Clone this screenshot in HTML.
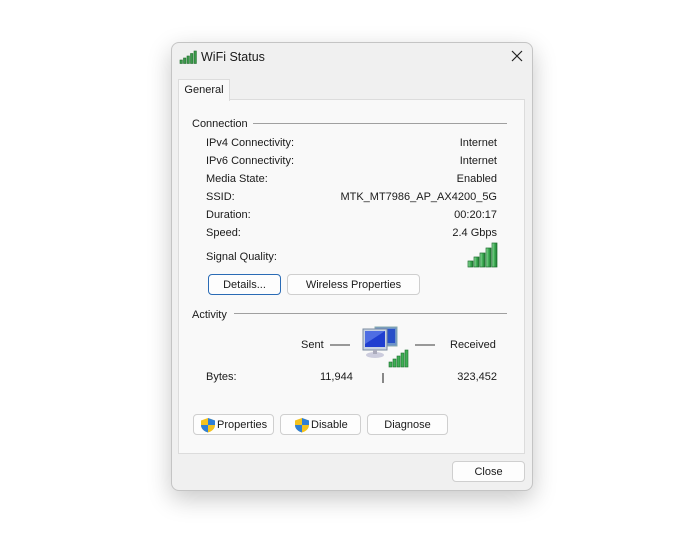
<!DOCTYPE html>
<html><head><meta charset="utf-8"><style>
body{margin:0;width:700px;height:536px;background:#fff;font-family:"Liberation Sans",sans-serif;font-size:11px;color:#1a1a1a;position:relative;overflow:hidden}
.a{position:absolute}
.win{left:171px;top:42px;width:360px;height:447px;background:#f0f0f0;border:1px solid #c4c4c4;border-radius:8px;box-shadow:0 8px 24px rgba(0,0,0,.22)}
.panel{left:178px;top:99px;width:345px;height:353px;background:#f9f9f9;border:1px solid #dcdcdc}
.tab{left:178px;top:79px;width:50px;height:21px;background:#f9f9f9;border:1px solid #dcdcdc;border-bottom:none;z-index:2;text-align:center;line-height:21px}
.btn{position:absolute;height:19px;background:#fdfdfd;border:1px solid #cfcfcf;border-radius:4px;text-align:center;line-height:21px;box-sizing:content-box}
.r{position:absolute;right:203px;text-align:right}
.l{position:absolute;left:206px}
.line{position:absolute;height:1px;background:#a0a0a0}
</style></head><body>
<div class="a win"></div>
<svg class="a" style="left:179px;top:50px" width="18" height="14"><g fill="#3a9a4a" stroke="#1f6b2c" stroke-width=".6"><rect x="1" y="10" width="2.4" height="3.5"/><rect x="4.5" y="8" width="2.4" height="5.5"/><rect x="8" y="6" width="2.4" height="7.5"/><rect x="11.5" y="3.5" width="2.4" height="10"/><rect x="15" y="1" width="2.4" height="12.5"/></g></svg>
<div class="a" style="left:201px;top:50px;font-size:12.5px">WiFi Status</div>
<svg class="a" style="left:511px;top:50px" width="12" height="12"><path d="M1 1L11 11M11 1L1 11" stroke="#222" stroke-width="1.2"/></svg>
<div class="a panel"></div>
<div class="a tab">General</div>
<div class="a" style="left:192px;top:118px">Connection</div>
<div class="line" style="left:253px;top:123px;width:254px"></div>
<div class="l" style="top:137px">IPv4 Connectivity:</div><div class="r" style="top:137px">Internet</div>
<div class="l" style="top:155px">IPv6 Connectivity:</div><div class="r" style="top:155px">Internet</div>
<div class="l" style="top:173px">Media State:</div><div class="r" style="top:173px">Enabled</div>
<div class="l" style="top:191px">SSID:</div><div class="r" style="top:191px">MTK_MT7986_AP_AX4200_5G</div>
<div class="l" style="top:209px">Duration:</div><div class="r" style="top:209px">00:20:17</div>
<div class="l" style="top:227px">Speed:</div><div class="r" style="top:227px">2.4 Gbps</div>
<div class="l" style="top:251px">Signal Quality:</div>
<svg class="a" style="left:467px;top:242px" width="32" height="26"><defs><linearGradient id="g" x1="0" x2="1"><stop offset="0" stop-color="#9be0a8"/><stop offset=".5" stop-color="#3fae55"/><stop offset="1" stop-color="#1d7a31"/></linearGradient></defs><g fill="url(#g)" stroke="#1d6e2e" stroke-width=".7"><rect x="1" y="19" width="5" height="6"/><rect x="7" y="15" width="5" height="10"/><rect x="13" y="11" width="5" height="14"/><rect x="19" y="6" width="5" height="19"/><rect x="25" y="1" width="5" height="24"/></g></svg>
<div class="btn" style="left:208px;top:274px;width:71px;border-color:#2a6bb5">Details...</div>
<div class="btn" style="left:287px;top:274px;width:131px">Wireless Properties</div>
<div class="a" style="left:192px;top:309px">Activity</div>
<div class="line" style="left:234px;top:313px;width:273px"></div>
<div class="a" style="left:301px;top:339px">Sent</div>
<div class="line" style="left:330px;top:344px;width:20px;height:2px;background:#999"></div>
<div class="line" style="left:415px;top:344px;width:20px;height:2px;background:#999"></div>
<div class="a" style="left:450px;top:339px">Received</div>
<svg class="a" style="left:362px;top:324px" width="50" height="46"><rect x="13" y="3" width="22" height="19" fill="#6d92c9" stroke="#8aa" stroke-width="1"/><rect x="15" y="5" width="18" height="14" fill="#2850c8"/><rect x="1" y="5" width="24" height="21" fill="#c8d4e4" stroke="#7b8ba0"/><rect x="3" y="7" width="20" height="16" fill="#1f3fd0"/><path d="M3 7L23 7L3 20Z" fill="#6f8ef0" opacity=".6"/><ellipse cx="13" cy="31" rx="9" ry="3" fill="#ccd"/><rect x="11" y="26" width="4" height="4" fill="#aab"/><g fill="#3fae55" stroke="#1d6e2e" stroke-width=".6"><rect x="27" y="38" width="3" height="5"/><rect x="31" y="35" width="3" height="8"/><rect x="35" y="32" width="3" height="11"/><rect x="39" y="29" width="3" height="14"/><rect x="43" y="26" width="3" height="17"/></g></svg>
<div class="l" style="top:371px;left:206px">Bytes:</div>
<div class="a" style="left:320px;top:371px">11,944</div>
<div class="line" style="left:382px;top:373px;width:2px;height:10px;background:#888"></div>
<div class="r" style="top:371px">323,452</div>
<div class="btn" style="left:193px;top:414px;width:79px;text-align:left;padding-left:0"><span style="position:absolute;left:23px">Properties</span></div>
<div class="btn" style="left:280px;top:414px;width:79px;text-align:left"><span style="position:absolute;left:30px">Disable</span></div>
<svg class="a" style="left:200px;top:417px;z-index:3" width="16" height="16"><path d="M8 1L15 3.5V8C15 12 11.5 14.5 8 15.5C4.5 14.5 1 12 1 8V3.5Z" fill="#f4c21e"/><path d="M8 1L15 3.5V8H8ZM8 8V15.5C4.5 14.5 1 12 1 8Z" fill="#2f7fd6"/></svg>
<svg class="a" style="left:294px;top:417px;z-index:3" width="16" height="16"><path d="M8 1L15 3.5V8C15 12 11.5 14.5 8 15.5C4.5 14.5 1 12 1 8V3.5Z" fill="#f4c21e"/><path d="M8 1L15 3.5V8H8ZM8 8V15.5C4.5 14.5 1 12 1 8Z" fill="#2f7fd6"/></svg>
<div class="btn" style="left:367px;top:414px;width:79px">Diagnose</div>
<div class="btn" style="left:452px;top:461px;width:71px">Close</div>
</body></html>
